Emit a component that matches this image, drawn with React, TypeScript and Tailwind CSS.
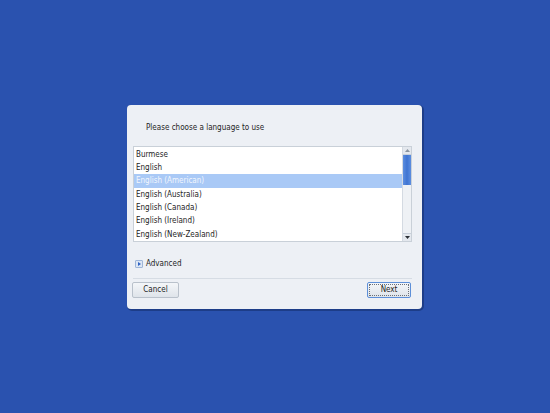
import React from "react";

const languages = [
  "Burmese",
  "English",
  "English (American)",
  "English (Australia)",
  "English (Canada)",
  "English (Ireland)",
  "English (New-Zealand)",
];

function Scrollbar() {
  return (
    <div className="flex w-[9px] flex-col border-l border-[#d4dae2] bg-[#eef1f5]">
      <div className="flex h-[8px] items-center justify-center border-b border-[#c8d0da] bg-[#e4e8ee]">
        <svg width="5" height="3" viewBox="0 0 5 3">
          <path d="M0 3 L2.5 0 L5 3 Z" fill="#8a94a0" />
        </svg>
      </div>
      <div className="h-[30px] bg-gradient-to-r from-[#5c8ee0] via-[#3f74d2] to-[#5c8ee0]" />
      <div className="flex-1" />
      <div className="flex h-[8px] items-center justify-center border-t border-[#c8d0da] bg-[#e4e8ee]">
        <svg width="5" height="3" viewBox="0 0 5 3">
          <path d="M0 0 L2.5 3 L5 0 Z" fill="#2a2f36" />
        </svg>
      </div>
    </div>
  );
}

export default function App() {
  return (
    <div
      className="flex h-[413px] w-[550px] items-center justify-center bg-[#2a52af] pr-[1px]"
      style={{ fontFamily: '"DejaVu Sans Condensed", "DejaVu Sans", "Liberation Sans", sans-serif' }}
    >
      <div className="flex h-[204px] w-[295px] flex-col rounded-[4px] bg-[#edf0f5] pl-[6px] pr-[10px] text-[8px] text-[#1e1e1e] shadow-[1px_1px_0_1px_#1d3d88]">
        <div className="pl-[13px] pt-[18px] pb-[13px] leading-[10px]">Please choose a language to use</div>
        <div className="flex h-[96px] overflow-hidden border border-[#c9d0d8] bg-white">
          <div className="flex-1 pt-[1px]">
            {languages.map((l) => (
              <div
                key={l}
                className={`h-[13.4px] pl-[2px] leading-[13.4px] ${
                  l === "English (American)" ? "bg-[#a9c9f6] text-[#f2f6fd]" : ""
                }`}
              >
                {l}
              </div>
            ))}
          </div>
          <Scrollbar />
        </div>
        <div className="mt-[17px] flex items-center gap-[3px] pl-[2px]">
          <div className="flex h-[8px] w-[8px] items-center justify-center rounded-[1px] border border-[#9fb6d8] bg-[#dce6f4]">
            <svg width="3" height="4" viewBox="0 0 3 4">
              <path d="M0 0 L3 2 L0 4 Z" fill="#2f63c4" />
            </svg>
          </div>
          <span className="leading-[10px]">Advanced</span>
        </div>
        <div className="mt-[9px] h-px bg-[#d6dce4]" />
        <div className="mt-[3px] flex justify-between">
          <button className="-ml-[1px] h-[16px] w-[47px] rounded-[2px] border border-[#b9c1cb] bg-gradient-to-b from-[#f4f6f9] to-[#dfe4ea] text-[8px] leading-[14px] text-[#1e1e1e]">
            Cancel
          </button>
          <button className="mr-[1px] flex h-[16px] w-[44px] items-center justify-center rounded-[2px] border border-[#5d8fd8] bg-gradient-to-b from-[#f4f6f9] to-[#dfe4ea] p-[1px] text-[8px] text-[#1e1e1e]">
            <span className="flex h-full w-full items-center justify-center border border-dotted border-[#6a7078] leading-[10px]">
              Next
            </span>
          </button>
        </div>
      </div>
    </div>
  );
}
